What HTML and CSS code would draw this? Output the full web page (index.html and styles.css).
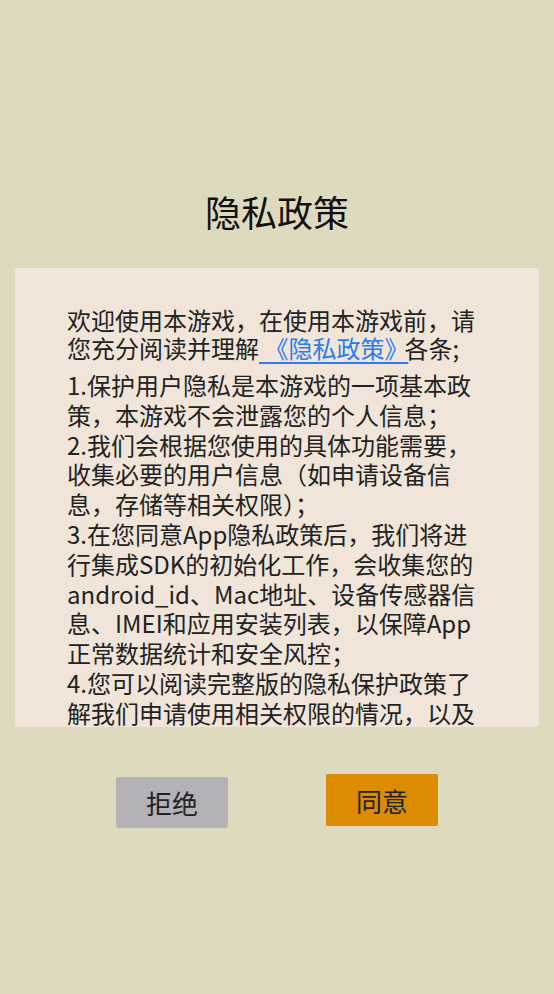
FILE: index.html
```html
<!DOCTYPE html>
<html lang="zh-CN">
<head>
    <meta charset="UTF-8">
    <meta name="viewport" content="width=device-width, initial-scale=1.0">
    <title>隐私政策</title>
    <link rel="stylesheet" href="styles.css">
</head>
<body>
    <h1 class="title">隐私政策</h1>

    <div class="policy-box">
        <p class="intro">欢迎使用本游戏，在使用本游戏前，请您充分阅读并理解<a class="policy-link" href="#"> 《隐私政策》</a>各条;</p>
        <p>1.保护用户隐私是本游戏的一项基本政策，本游戏不会泄露您的个人信息；</p>
        <p>2.我们会根据您使用的具体功能需要，收集必要的用户信息（如申请设备信息，存储等相关权限）；</p>
        <p>3.在您同意App隐私政策后，我们将进行集成SDK的初始化工作，会收集您的android_id、Mac地址、设备传感器信息、IMEI和应用安装列表，以保障App正常数据统计和安全风控；</p>
        <p>4.您可以阅读完整版的隐私保护政策了解我们申请使用相关权限的情况，以及对您个人隐私的保护措施。</p>
    </div>

    <div class="actions">
        <button class="btn btn-refuse">拒绝</button>
        <button class="btn btn-agree">同意</button>
    </div>
</body>
</html>
```

FILE: styles.css
```css
body {
    margin: 0;
    background: #dddabd;
    font-family: "Noto Sans CJK SC", "Noto Sans", sans-serif;
    color: #222;
    min-height: 100vh;
}

.title {
    margin: 0;
    padding-top: 190px;
    font-size: 36px;
    font-weight: normal;
    line-height: 43px;
    text-align: center;
    color: #111;
}

.policy-box {
    margin: 35px 15px 0;
    height: 459px;
    box-sizing: border-box;
    padding: 38px 56px 0 52px;
    background: #f0e5d8;
    border-radius: 2px;
    overflow: hidden;
}

.policy-box p {
    margin: 0;
    font-size: 24px;
    line-height: 29.8px;
}

.policy-box p.intro {
    line-height: 28px;
    margin-bottom: 8px;
}

.policy-link {
    color: #2a7cf0;
    text-decoration: underline;
    text-decoration-thickness: 2px;
    text-underline-offset: 4px;
    margin-right: -4px;
}

.actions {
    display: flex;
    justify-content: center;
    align-items: flex-start;
    gap: 98px;
    margin-top: 47px;
}

.btn {
    width: 112px;
    border: none;
    border-radius: 2px;
    font-family: inherit;
    font-size: 26px;
    color: #222;
    cursor: pointer;
}

.btn-refuse {
    height: 51px;
    margin-top: 3px;
    background: #b4b2b7;
}

.btn-agree {
    height: 52px;
    background: #db8c00;
}
```
